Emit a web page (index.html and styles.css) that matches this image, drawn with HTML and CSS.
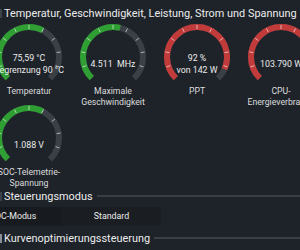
FILE: index.html
```html
<!DOCTYPE html>
<html lang="de">
<head>
    <meta charset="UTF-8">
    <meta name="viewport" content="width=device-width, initial-scale=1.0">
    <title>Leistung</title>
    <link rel="stylesheet" href="styles.css">
</head>
<body>
    <div class="page">
        <div class="section-head first">
            <span class="mark"></span>
            <span class="title">Temperatur, Geschwindigkeit, Leistung, Strom und Spannung</span>
            <span class="rule"></span>
        </div>

        <div class="gauges" id="gauges"></div>

        <div class="section-head">
            <span class="mark"></span>
            <span class="title">Steuerungsmodus</span>
            <span class="rule"></span>
        </div>

        <div class="mode-row">
            <div class="mode-label">OC-Modus</div>
            <div class="mode-value">Standard</div>
        </div>

        <div class="section-head">
            <span class="mark light"></span>
            <span class="title">Kurvenoptimierungssteuerung</span>
            <span class="rule"></span>
        </div>
    </div>

    <script>
        const gauges = [
            { lines: ['75,59 °C', 'Begrenzung 90 °C'], label: ['Temperatur'], value: 0.6, color: 'green' },
            { lines: ['4.511 &nbsp;MHz'], label: ['Maximale', 'Geschwindigkeit'], value: 0.55, color: 'green' },
            { lines: ['92 %', 'von 142 W'], label: ['PPT'], value: 0.92, color: 'red' },
            { lines: ['103.790 W'], label: ['CPU-', 'Energieverbrauch'], value: 0.97, color: 'red' },
            { lines: ['1.088 V'], label: ['SOC-Telemetrie-', 'Spannung'], value: 0.6, color: 'green' }
        ];

        const R = 30;
        const CIRC = 2 * Math.PI * R;
        const SWEEP = CIRC * 0.75;

        function ticks() {
            let out = '';
            for (let i = 1; i < 10; i++) {
                const a = (135 + 27 * i) * Math.PI / 180;
                const x1 = 35 + Math.cos(a) * 28, y1 = 35 + Math.sin(a) * 28;
                const x2 = 35 + Math.cos(a) * 32, y2 = 35 + Math.sin(a) * 32;
                out += `<line x1="${x1.toFixed(2)}" y1="${y1.toFixed(2)}" x2="${x2.toFixed(2)}" y2="${y2.toFixed(2)}"/>`;
            }
            return out;
        }

        const box = document.getElementById('gauges');
        gauges.forEach(g => {
            const cell = document.createElement('div');
            cell.className = 'gauge';
            cell.innerHTML = `
                <svg viewBox="0 0 70 62" width="70" height="62">
                    <circle class="track" cx="35" cy="35" r="${R}" stroke-dasharray="${SWEEP} ${CIRC}" transform="rotate(135 35 35)"/>
                    <circle class="fill ${g.color}" cx="35" cy="35" r="${R}" stroke-dasharray="${SWEEP * g.value} ${CIRC}" transform="rotate(135 35 35)"/>
                    <g class="ticks">${ticks()}</g>
                </svg>
                <div class="value">${g.lines.map(l => `<span>${l}</span>`).join('')}</div>
                <div class="label">${g.label.map(l => `<span>${l}</span>`).join('')}</div>`;
            box.appendChild(cell);
        });
    </script>
</body>
</html>
```

FILE: styles.css
```css
body {
    margin: 0;
    background-color: #1e232a;
    color: #ebebeb;
    font-family: Roboto, "Noto Sans", sans-serif;
    overflow: hidden;
}
.page {
    width: 300px;
    height: 250px;
    overflow: hidden;
}
.section-head {
    display: flex;
    align-items: center;
    height: 20px;
    margin-top: 2px;
}
.section-head.first {
    margin-top: 0;
    padding-top: 4px;
    height: 18px;
}
.mark {
    flex: none;
    width: 2px;
    height: 9px;
    background-color: #3c4249;
}
.mark.light {
    background-color: #8a8f96;
}
.title {
    flex: none;
    padding-left: 2px;
    font-size: 10.9px;
    white-space: nowrap;
}
.rule {
    flex: 1;
    height: 2px;
    margin-left: 4px;
    background-color: #3a3f47;
}
.gauges {
    display: grid;
    grid-template-columns: repeat(4, 84px);
    grid-auto-rows: 81px;
    margin-left: -13px;
}
.gauge {
    position: relative;
    text-align: center;
}
.gauge svg {
    display: block;
    margin: 0 auto;
}
.track, .fill {
    fill: none;
    stroke-width: 6;
}
.track {
    stroke: #3b3f46;
}
.fill.green {
    stroke: #2f9f33;
}
.fill.red {
    stroke: #c23b3b;
}
.ticks line {
    stroke: rgba(255, 255, 255, 0.6);
    stroke-width: 1;
}
.value {
    position: absolute;
    left: -10px;
    right: -10px;
    top: 30px;
    height: 24px;
    display: flex;
    flex-direction: column;
    justify-content: center;
    font-size: 8.8px;
    line-height: 12px;
    white-space: nowrap;
}
.label {
    display: flex;
    flex-direction: column;
    align-items: center;
    margin: 2px -10px 0;
    font-size: 8.7px;
    line-height: 10.5px;
    color: #dcdcdc;
    white-space: nowrap;
}
.mode-row {
    display: flex;
    height: 19px;
    margin-top: 1px;
    margin-left: -13px;
    font-size: 8.8px;
    line-height: 19px;
}
.mode-label {
    box-sizing: border-box;
    width: 75px;
    padding-left: 8px;
    background-color: #171a1f;
}
.mode-value {
    width: 99px;
    text-align: center;
    background-color: #1a1e23;
    border-radius: 0 3px 3px 0;
}
```
